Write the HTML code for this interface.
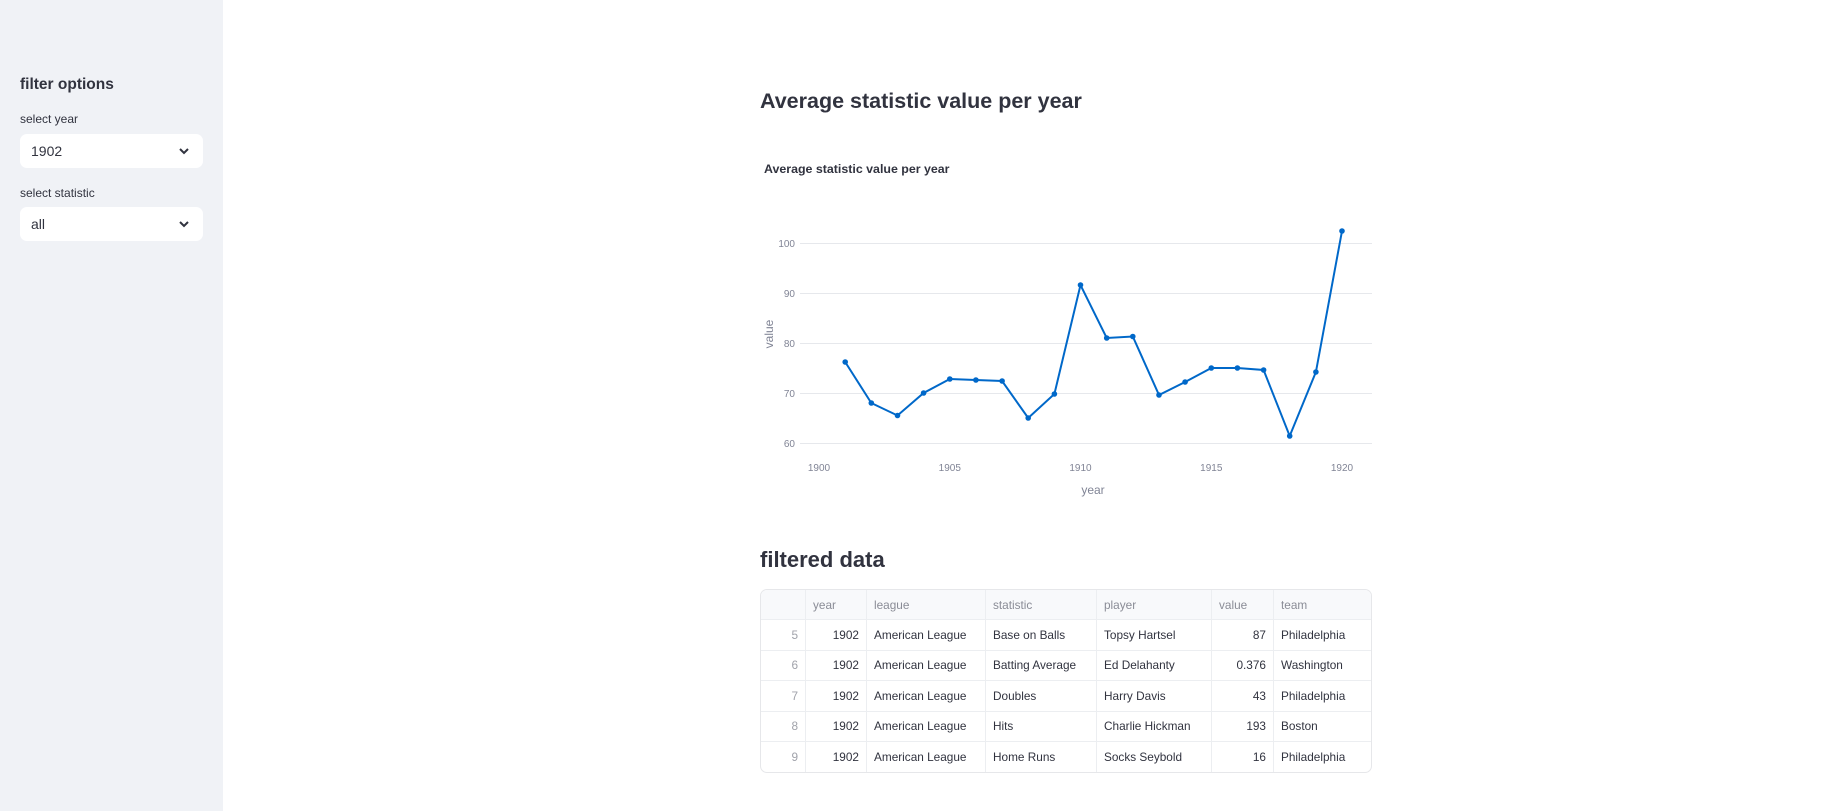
<!DOCTYPE html>
<html><head><meta charset="utf-8"><style>
*{box-sizing:border-box;margin:0;padding:0}
body{width:1823px;height:811px;background:#fff;font-family:"Liberation Sans",sans-serif;color:#31333f;position:relative;overflow:hidden}
.sb{position:absolute;left:0;top:0;width:223px;height:811px;background:#f0f2f6}
.a{position:absolute;white-space:nowrap}
.sel{position:absolute;left:20px;width:183px;height:34px;background:#fff;border-radius:7px;font-size:14px;padding:9px 0 0 11px}
.sel svg{position:absolute;right:13px;top:13px}
table{position:absolute;left:760px;top:589px;width:612px;table-layout:fixed;border-collapse:separate;border-spacing:0;border:1px solid #e6e7ea;border-radius:7px;font-size:11.8px;overflow:hidden}
td,th{height:30.4px;border-right:1px solid #eceef1;border-bottom:1px solid #eceef1;padding:0 7px;font-weight:normal;text-align:left;white-space:nowrap;overflow:hidden}
th{background:#f8f9fb;color:#8a8c96}
tr:last-child td{border-bottom:none}
td:last-child,th:last-child{border-right:none}
.r{text-align:right}.g{color:#a0a2aa}
</style></head><body>
<div class="sb"></div>
<div class="a" style="left:20px;top:76px;font-size:15.5px;font-weight:bold">filter options</div>
<div class="a" style="left:20px;top:112px;font-size:12px">select year</div>
<div class="sel" style="top:134px">1902<svg width="12" height="8" viewBox="0 0 12 8"><path d="M2 2l4 4 4-4" stroke="#31333f" stroke-width="2" fill="none"/></svg></div>
<div class="a" style="left:20px;top:186px;font-size:12px">select statistic</div>
<div class="sel" style="top:207px">all<svg width="12" height="8" viewBox="0 0 12 8"><path d="M2 2l4 4 4-4" stroke="#31333f" stroke-width="2" fill="none"/></svg></div>

<div class="a" style="left:760px;top:89px;font-size:21.5px;font-weight:bold">Average statistic value per year</div>
<svg class="a" style="left:0;top:0" width="1823" height="811">
<text x="764" y="173" font-size="12.4" font-weight="bold" fill="#31333f" font-family="Liberation Sans">Average statistic value per year</text>
<g stroke="#e6e8ec" stroke-width="1">
<line x1="800" x2="1372" y1="243.5" y2="243.5"/><line x1="800" x2="1372" y1="293.5" y2="293.5"/><line x1="800" x2="1372" y1="343.5" y2="343.5"/><line x1="800" x2="1372" y1="393.5" y2="393.5"/><line x1="800" x2="1372" y1="443.5" y2="443.5"/>
</g>
<g font-size="10" fill="#808495" font-family="Liberation Sans" text-anchor="end">
<text x="795" y="247">100</text><text x="795" y="297">90</text><text x="795" y="347">80</text><text x="795" y="397">70</text><text x="795" y="447">60</text>
</g>
<g font-size="10" fill="#808495" font-family="Liberation Sans" text-anchor="middle">
<text x="819" y="471">1900</text><text x="949.8" y="471">1905</text><text x="1080.5" y="471">1910</text><text x="1211.3" y="471">1915</text><text x="1342" y="471">1920</text>
</g>
<text x="1093" y="494" font-size="12" fill="#808495" text-anchor="middle" font-family="Liberation Sans">year</text>
<text transform="translate(773,334) rotate(-90)" font-size="12" fill="#808495" text-anchor="middle" font-family="Liberation Sans">value</text>
<polyline fill="none" stroke="#0068c9" stroke-width="2" points="845.2,362 871.3,403 897.5,415.5 923.6,393 949.8,379 975.9,380 1002.1,381 1028.2,418 1054.4,394 1080.5,285 1106.7,338 1132.8,336.5 1159,395 1185.1,382 1211.3,368 1237.4,368 1263.6,370 1289.7,436 1315.9,372 1342,231"/>
<g fill="#0068c9">
<circle cx="845.2" cy="362" r="2.8"/><circle cx="871.3" cy="403" r="2.8"/><circle cx="897.5" cy="415.5" r="2.8"/><circle cx="923.6" cy="393" r="2.8"/><circle cx="949.8" cy="379" r="2.8"/><circle cx="975.9" cy="380" r="2.8"/><circle cx="1002.1" cy="381" r="2.8"/><circle cx="1028.2" cy="418" r="2.8"/><circle cx="1054.4" cy="394" r="2.8"/><circle cx="1080.5" cy="285" r="2.8"/><circle cx="1106.7" cy="338" r="2.8"/><circle cx="1132.8" cy="336.5" r="2.8"/><circle cx="1159" cy="395" r="2.8"/><circle cx="1185.1" cy="382" r="2.8"/><circle cx="1211.3" cy="368" r="2.8"/><circle cx="1237.4" cy="368" r="2.8"/><circle cx="1263.6" cy="370" r="2.8"/><circle cx="1289.7" cy="436" r="2.8"/><circle cx="1315.9" cy="372" r="2.8"/><circle cx="1342" cy="231" r="2.8"/>
</g>
</svg>
<div class="a" style="left:760px;top:547px;font-size:22px;font-weight:bold">filtered data</div>
<table>
<colgroup><col style="width:45px"><col style="width:61px"><col style="width:119px"><col style="width:111px"><col style="width:115px"><col style="width:62px"><col></colgroup>
<tr><th></th><th>year</th><th>league</th><th>statistic</th><th>player</th><th>value</th><th>team</th></tr>
<tr><td class="r g">5</td><td class="r">1902</td><td>American League</td><td>Base on Balls</td><td>Topsy Hartsel</td><td class="r">87</td><td>Philadelphia</td></tr>
<tr><td class="r g">6</td><td class="r">1902</td><td>American League</td><td>Batting Average</td><td>Ed Delahanty</td><td class="r">0.376</td><td>Washington</td></tr>
<tr><td class="r g">7</td><td class="r">1902</td><td>American League</td><td>Doubles</td><td>Harry Davis</td><td class="r">43</td><td>Philadelphia</td></tr>
<tr><td class="r g">8</td><td class="r">1902</td><td>American League</td><td>Hits</td><td>Charlie Hickman</td><td class="r">193</td><td>Boston</td></tr>
<tr><td class="r g">9</td><td class="r">1902</td><td>American League</td><td>Home Runs</td><td>Socks Seybold</td><td class="r">16</td><td>Philadelphia</td></tr>
</table>
</body></html>
